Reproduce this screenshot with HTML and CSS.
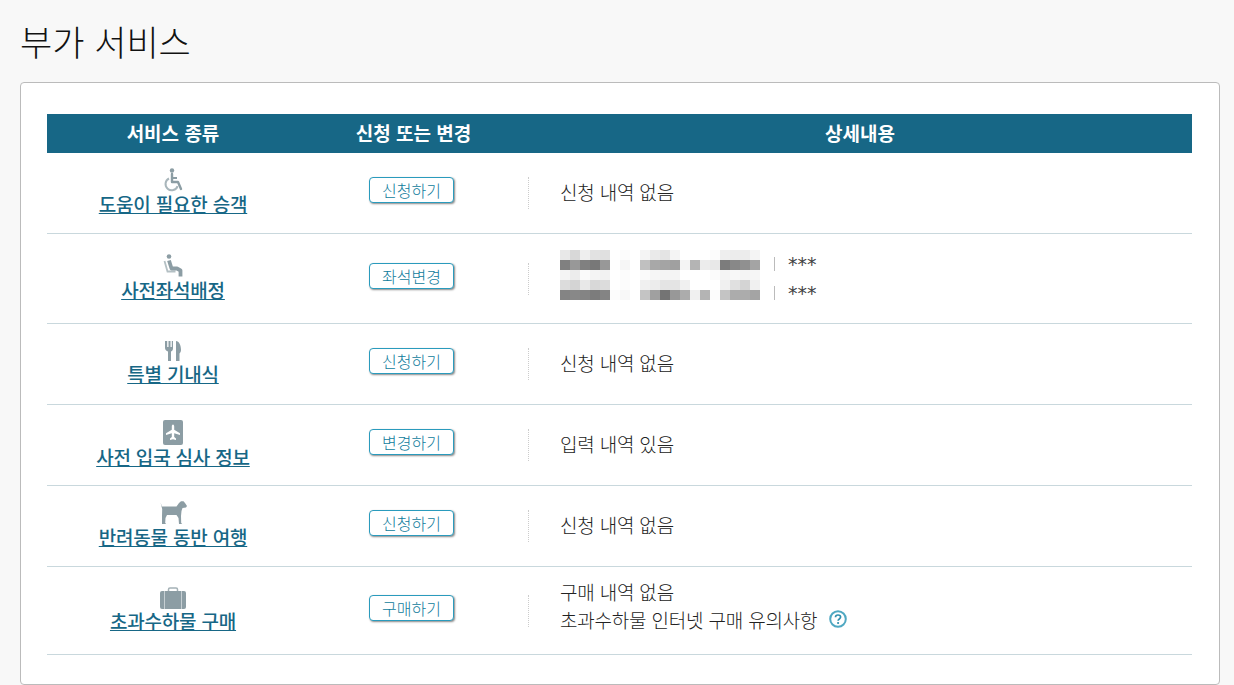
FILE: index.html
```html
<!DOCTYPE html>
<html lang="ko">
<head>
    <meta charset="utf-8">
    <title>부가 서비스</title>
    <link rel="stylesheet" href="styles.css">
</head>
<body>
    <h1 class="page-title">부가 서비스</h1>
    <div class="card">
        <table class="service-table">
            <thead>
                <tr>
                    <th class="col-service">서비스 종류</th>
                    <th class="col-action">신청 또는 변경</th>
                    <th class="col-detail">상세내용</th>
                </tr>
            </thead>
            <tbody>
                <tr class="row-1">
                    <td class="service">
                        <svg class="icon" width="24" height="24" viewBox="0 0 24 24"><circle cx="11" cy="2.5" r="2.2" fill="#8c9da4"/><path d="M11 6v8h6l3 7" fill="none" stroke="#8c9da4" stroke-width="2.4" stroke-linejoin="round" stroke-linecap="round"/><path d="M11 10h5" stroke="#8c9da4" stroke-width="2"/><path d="M8 10.5a6.2 6.2 0 1 0 8.600 7.600" fill="none" stroke="#a9b6bb" stroke-width="2"/></svg>
                        <a href="#">도움이 필요한 승객</a>
                    </td>
                    <td><button class="btn">신청하기</button></td>
                    <td><div class="detail"><span class="divider"></span><div class="detail-text">신청 내역 없음</div></div></td>
                </tr>
                <tr class="row-2">
                    <td class="service">
                        <svg class="icon" width="20" height="24" viewBox="0 0 20 24"><circle cx="6" cy="2.500" r="2.300" fill="#8c9da4"/><path d="M1.500 7l3 10.500h8" fill="none" stroke="#b4c0c4" stroke-width="1.800"/><path d="M6 6.500l2.500 8h5.500l3.500 2v6" fill="none" stroke="#8c9da4" stroke-width="3.800" stroke-linejoin="round"/></svg>
                        <a href="#">사전좌석배정</a>
                    </td>
                    <td><button class="btn">좌석변경</button></td>
                    <td>
                        <div class="detail">
                            <span class="divider"></span>
                            <div class="seats">
                                <svg class="mosaic" width="200" height="50" viewBox="0 0 20 5" shape-rendering="crispEdges">
                                    <g>
                                        <rect x="0" y="0" width="1" height="1" fill="#e8e8e8"/><rect x="1" y="0" width="1" height="1" fill="#d8d8d8"/><rect x="2" y="0" width="1" height="1" fill="#eeeeee"/><rect x="3" y="0" width="1" height="1" fill="#e2e2e2"/><rect x="4" y="0" width="1" height="1" fill="#e0e0e0"/><rect x="6" y="0" width="1" height="1" fill="#fcfcfc"/><rect x="8" y="0" width="1" height="1" fill="#f4f4f4"/><rect x="9" y="0" width="1" height="1" fill="#eaeaea"/><rect x="10" y="0" width="1" height="1" fill="#e4e4e4"/><rect x="11" y="0" width="1" height="1" fill="#f4f4f4"/><rect x="15" y="0" width="1" height="1" fill="#fcfcfc"/><rect x="16" y="0" width="1" height="1" fill="#eeeeee"/><rect x="17" y="0" width="1" height="1" fill="#ececec"/><rect x="18" y="0" width="1" height="1" fill="#ececec"/><rect x="19" y="0" width="1" height="1" fill="#f4f4f4"/>
                                    </g>
                                    <g>
                                        <rect x="0" y="1" width="1" height="1" fill="#808080"/><rect x="1" y="1" width="1" height="1" fill="#989898"/><rect x="2" y="1" width="1" height="1" fill="#808080"/><rect x="3" y="1" width="1" height="1" fill="#787878"/><rect x="4" y="1" width="1" height="1" fill="#989898"/><rect x="5" y="1" width="1" height="1" fill="#fefefe"/><rect x="6" y="1" width="1" height="1" fill="#f6f6f6"/><rect x="8" y="1" width="1" height="1" fill="#c0c0c0"/><rect x="9" y="1" width="1" height="1" fill="#a8a8a8"/><rect x="10" y="1" width="1" height="1" fill="#a4a4a4"/><rect x="11" y="1" width="1" height="1" fill="#a0a0a0"/><rect x="12" y="1" width="1" height="1" fill="#f4f4f4"/><rect x="13" y="1" width="1" height="1" fill="#b4b4b4"/><rect x="14" y="1" width="1" height="1" fill="#ececec"/><rect x="15" y="1" width="1" height="1" fill="#e8e8e8"/><rect x="16" y="1" width="1" height="1" fill="#7c7c7c"/><rect x="17" y="1" width="1" height="1" fill="#888888"/><rect x="18" y="1" width="1" height="1" fill="#909090"/><rect x="19" y="1" width="1" height="1" fill="#a4a4a4"/>
                                    </g>
                                    <g>
                                        <rect x="0" y="2" width="1" height="1" fill="#f4f4f4"/><rect x="1" y="2" width="1" height="1" fill="#ececec"/><rect x="2" y="2" width="1" height="1" fill="#fafafa"/><rect x="3" y="2" width="1" height="1" fill="#f4f4f4"/><rect x="4" y="2" width="1" height="1" fill="#f2f2f2"/><rect x="6" y="2" width="1" height="1" fill="#fcfcfc"/><rect x="8" y="2" width="1" height="1" fill="#fafafa"/><rect x="9" y="2" width="1" height="1" fill="#f6f6f6"/><rect x="10" y="2" width="1" height="1" fill="#f4f4f4"/><rect x="11" y="2" width="1" height="1" fill="#f4f4f4"/><rect x="15" y="2" width="1" height="1" fill="#fbfbfb"/><rect x="16" y="2" width="1" height="1" fill="#f4f4f4"/><rect x="17" y="2" width="1" height="1" fill="#f8f8f8"/><rect x="18" y="2" width="1" height="1" fill="#f4f4f4"/><rect x="19" y="2" width="1" height="1" fill="#f6f6f6"/>
                                    </g>
                                    <g>
                                        <rect x="0" y="3" width="1" height="1" fill="#dcdcdc"/><rect x="1" y="3" width="1" height="1" fill="#d4d4d4"/><rect x="2" y="3" width="1" height="1" fill="#e8e8e8"/><rect x="3" y="3" width="1" height="1" fill="#d8d8d8"/><rect x="4" y="3" width="1" height="1" fill="#dcdcdc"/><rect x="6" y="3" width="1" height="1" fill="#fcfcfc"/><rect x="8" y="3" width="1" height="1" fill="#f0f0f0"/><rect x="9" y="3" width="1" height="1" fill="#ececec"/><rect x="10" y="3" width="1" height="1" fill="#e4e4e4"/><rect x="11" y="3" width="1" height="1" fill="#e4e4e4"/><rect x="12" y="3" width="1" height="1" fill="#f0f0f0"/><rect x="16" y="3" width="1" height="1" fill="#f0f0f0"/><rect x="17" y="3" width="1" height="1" fill="#e0e0e0"/><rect x="18" y="3" width="1" height="1" fill="#d4d4d4"/><rect x="19" y="3" width="1" height="1" fill="#f0f0f0"/>
                                    </g>
                                    <g>
                                        <rect x="0" y="4" width="1" height="1" fill="#848484"/><rect x="1" y="4" width="1" height="1" fill="#888888"/><rect x="2" y="4" width="1" height="1" fill="#848484"/><rect x="3" y="4" width="1" height="1" fill="#7c7c7c"/><rect x="4" y="4" width="1" height="1" fill="#848484"/><rect x="5" y="4" width="1" height="1" fill="#fcfcfc"/><rect x="6" y="4" width="1" height="1" fill="#f8f8f8"/><rect x="8" y="4" width="1" height="1" fill="#c4c4c4"/><rect x="9" y="4" width="1" height="1" fill="#a0a0a0"/><rect x="10" y="4" width="1" height="1" fill="#747474"/><rect x="11" y="4" width="1" height="1" fill="#989898"/><rect x="12" y="4" width="1" height="1" fill="#acacac"/><rect x="13" y="4" width="1" height="1" fill="#f0f0f0"/><rect x="14" y="4" width="1" height="1" fill="#b4b4b4"/><rect x="15" y="4" width="1" height="1" fill="#fcfcfc"/><rect x="16" y="4" width="1" height="1" fill="#c4c4c4"/><rect x="17" y="4" width="1" height="1" fill="#acacac"/><rect x="18" y="4" width="1" height="1" fill="#acacac"/><rect x="19" y="4" width="1" height="1" fill="#a4a4a4"/>
                                    </g>
                                </svg>
                                <div class="seat-codes">
                                    <div class="seat-code">***</div>
                                    <div class="seat-code">***</div>
                                </div>
                            </div>
                        </div>
                    </td>
                </tr>
                <tr class="row-3">
                    <td class="service">
                        <svg class="icon" width="18" height="22" viewBox="0 0 18 22"><path d="M1 1v7c0 2 1.500 3 3 3.500V21h3V11.500C8.500 11 9 10 9 8V1H7.800v6H6.500V1H4.500v6H3.200V1z" fill="#8c9da4"/><path d="M12 21V1c3 0 5 4 5 9 0 2-1 3-1.500 3.500V21z" fill="#8c9da4"/></svg>
                        <a href="#">특별 기내식</a>
                    </td>
                    <td><button class="btn">신청하기</button></td>
                    <td><div class="detail"><span class="divider"></span><div class="detail-text">신청 내역 없음</div></div></td>
                </tr>
                <tr class="row-4">
                    <td class="service">
                        <svg class="icon" width="20" height="25" viewBox="0 0 20 25"><rect width="20" height="25" rx="2" fill="#8c9da4"/><path d="M10 4.500c.8 0 1.200 1 1.200 2v3.300l5.800 3.500v1.700l-5.800-1.800v3.800l1.800 1.400V20L10 19.200 7 20v-1.600l1.800-1.400v-3.800L3 15v-1.700l5.800-3.500V6.500c0-1 .4-2 1.200-2z" fill="#fff"/></svg>
                        <a href="#">사전 입국 심사 정보</a>
                    </td>
                    <td><button class="btn">변경하기</button></td>
                    <td><div class="detail"><span class="divider"></span><div class="detail-text">입력 내역 있음</div></div></td>
                </tr>
                <tr class="row-5">
                    <td class="service">
                        <svg class="icon" width="27" height="24" viewBox="0 0 27 24"><path d="M.5 1.500L2 5.500h14.500L19 2 21 .3h2.500L25 2l2 3-1 1.500-3.500.5-1 3-.5 5 .2 7 1 1h-3.200l-.5-6-2-3H7l-1.500 3-.3 5 1 1H2V15l.2-7z" fill="#8c9da4"/></svg>
                        <a href="#">반려동물 동반 여행</a>
                    </td>
                    <td><button class="btn">신청하기</button></td>
                    <td><div class="detail"><span class="divider"></span><div class="detail-text">신청 내역 없음</div></div></td>
                </tr>
                <tr class="row-6">
                    <td class="service">
                        <svg class="icon" width="26" height="22" viewBox="0 0 26 22"><path d="M8.500 5V2.500c0-1 .5-1.500 1.500-1.500h6c1 0 1.500.5 1.500 1.500V5" fill="none" stroke="#a4b1b6" stroke-width="1.500"/><rect x="0" y="4" width="26" height="18" rx="2" fill="#8c9da4"/><path d="M4.500 4v18M21.500 4v18" stroke="#d5dcdf" stroke-width=".8"/></svg>
                        <a href="#">초과수하물 구매</a>
                    </td>
                    <td><button class="btn">구매하기</button></td>
                    <td>
                        <div class="detail">
                            <span class="divider"></span>
                            <div class="detail-text detail-text-wide">
                                <div class="detail-line">구매 내역 없음</div>
                                <div class="detail-line">초과수하물 인터넷 구매 유의사항<svg class="help" width="18" height="18" viewBox="0 0 18 18"><circle cx="9" cy="9" r="7.800" fill="none" stroke="#4fa8c2" stroke-width="2"/><path d="M6.500 7.200C6.500 5.800 7.600 5 9 5s2.600.8 2.600 2.100c0 1.900-2.500 1.900-2.500 3.700" fill="none" stroke="#2f8fae" stroke-width="1.700"/><circle cx="9.100" cy="13" r="1.100" fill="#2f8fae"/></svg></div>
                            </div>
                        </div>
                    </td>
                </tr>
            </tbody>
        </table>
    </div>
</body>
</html>
```

FILE: styles.css
```css
html, body {
    height: 100%;
}

body {
    margin: 0;
    background-color: #f8f8f8;
    font-family: "Noto Sans CJK KR", "Noto Sans", sans-serif;
    color: #222;
    overflow: hidden;
}

.page-title {
    margin: 0;
    padding: 16px 20px 0;
    height: 82px;
    box-sizing: border-box;
    font-size: 35px;
    line-height: 50px;
    font-weight: 300;
    color: #111;
}

.card {
    margin: 0 14px 0 20px;
    padding: 31px 27px 29px 26px;
    background-color: #fff;
    border: 1px solid #bbb;
    border-radius: 4px;
}

.service-table {
    width: 100%;
    border-collapse: collapse;
    table-layout: fixed;
}

.service-table th {
    height: 36px;
    padding: 0 0 3px;
    background-color: #176786;
    color: #fff;
    font-size: 19px;
    font-weight: 700;
}

.service-table .col-service {
    width: 252px;
}

.service-table .col-action {
    width: 223px;
    padding-left: 3px;
}

.service-table .col-detail {
    padding-left: 3px;
}

.service-table td {
    padding: 0;
    border-bottom: 1px solid #c9d8dd;
    font-size: 19px;
    font-weight: 300;
    letter-spacing: -0.2px;
    vertical-align: middle;
}

.row-1 td { height: 80px; }
.row-2 td { height: 89px; }
.row-3 td,
.row-4 td,
.row-5 td { height: 80px; }
.row-6 td { height: 87px; }

.service {
    text-align: center;
}

.icon {
    display: block;
    margin: 0 auto -2px;
}

.service a {
    display: inline-block;
    margin-bottom: 3px;
    color: #176786;
    font-size: 19px;
    font-weight: 500;
    line-height: 22px;
}

.btn {
    display: block;
    width: 85px;
    height: 26px;
    margin: 0 0 6px 70px;
    padding: 0;
    background-color: #fff;
    border: 1px solid #2a9bbd;
    border-radius: 4px;
    box-shadow: 1px 1px 2px #888;
    color: #0f7c9c;
    font-family: inherit;
    font-size: 16px;
    font-weight: 300;
    line-height: 20px;
}

.detail {
    display: flex;
    align-items: center;
    padding-left: 3px;
}

.divider {
    width: 0;
    height: 32px;
    margin-right: 31px;
    border-left: 1px dotted #ccc;
}

.detail-text {
    margin-bottom: 4px;
}

.detail-text-wide {
    margin-bottom: 10px;
}

.detail-line {
    line-height: 28px;
}

.seats {
    display: flex;
    align-items: center;
}

.mosaic {
    display: block;
    margin-bottom: 8px;
}

.seat-codes {
    margin-left: 14px;
}

.seat-code {
    height: 29px;
    padding-left: 14px;
    color: #444;
    font-family: "DejaVu Sans", sans-serif;
    font-size: 19px;
    font-weight: 400;
    letter-spacing: 0;
    line-height: 29px;
    background: linear-gradient(#bbb, #bbb) no-repeat 0 7px / 1px 14px;
}

.help {
    margin-left: 12px;
    vertical-align: 0;
}
```
